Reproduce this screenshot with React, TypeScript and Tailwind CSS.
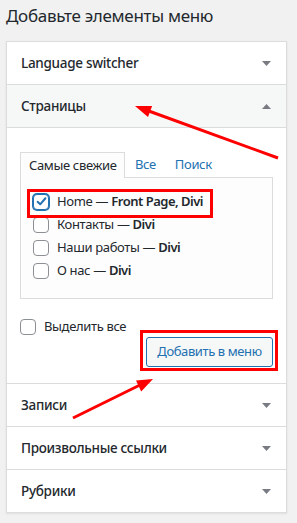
import React from 'react';

const FONT = "font-['Noto_Sans',sans-serif]";

function Triangle({ up }: { up?: boolean }) {
  return (
    <svg width="9" height="5" viewBox="0 0 9 5" className="shrink-0">
      {up ? <polygon points="0,5 9,5 4.5,0" fill="#787c82" /> : <polygon points="0,0 9,0 4.5,5" fill="#787c82" />}
    </svg>
  );
}

function SectionTitle({ title, open, last }: { title: string; open?: boolean; last?: boolean }) {
  return (
    <div
      className={`flex h-[42px] items-center justify-between pl-[14px] pr-[15px] text-[13.5px] font-medium tracking-[-0.3px] ${
        open ? 'bg-[#f6f7f7]' : 'bg-white'
      } ${last ? '' : 'box-content border-b border-[#dcdcde]'}`}
    >
      <span>{title}</span>
      <Triangle up={open} />
    </div>
  );
}

function Checkbox({ checked }: { checked?: boolean }) {
  return (
    <span
      className={`flex h-[16px] w-[16px] shrink-0 items-center justify-center rounded-[4px] border bg-white ${
        checked ? 'border-[#2271b1] shadow-[0_0_0_1px_#2271b1]' : 'border-[#8c8f94]'
      }`}
    >
      {checked && (
        <svg width="13" height="13" viewBox="0 0 20 20">
          <path d="M4 10.5l4 3.8L16 5" fill="none" stroke="#2271b1" strokeWidth="3" strokeLinecap="round" strokeLinejoin="round" />
        </svg>
      )}
    </span>
  );
}

const PAGES = [
  { name: 'Home', extra: 'Front Page, Divi', checked: true },
  { name: 'Контакты', extra: 'Divi' },
  { name: 'Наши работы', extra: 'Divi' },
  { name: 'О нас', extra: 'Divi' },
];

export default function App() {
  return (
    <div className={`relative min-h-[523px] w-[297px] bg-[#f1f1f1] px-[6px] pt-[4px] text-[#23282d] ${FONT}`}>
      <h2 className="h-[37px] text-[17px] leading-[24px] tracking-[-0.3px]">Добавьте элементы меню</h2>

      <div className="w-[281px] border border-[#dcdcde] bg-white shadow-[0_1px_2px_rgba(0,0,0,0.08)]">
        <SectionTitle title="Language switcher" />
        <SectionTitle title="Страницы" open />

        <div className="border-b border-[#dcdcde] px-[13px] pb-[16px] pt-[24px] text-[13px] tracking-[-0.35px]">
          <div className="flex h-[25px] items-stretch">
            <div className="relative z-10 -mb-px flex w-[105px] items-center border border-b-0 border-[#dcdcde] bg-[#fdfdfd] pl-[8px]">
              Самые свежие
            </div>
            <span className="ml-[10px] flex items-center text-[#2271b1]">Все</span>
            <span className="ml-[19px] flex items-center text-[#2271b1]">Поиск</span>
          </div>
          <div className="h-[122px] border border-[#dcdcde] bg-[#fdfdfd] pl-[12px] pt-[12px]">
            {PAGES.map((p) => (
              <label key={p.name} className="flex h-[23px] items-center gap-[8px]">
                <Checkbox checked={p.checked} />
                <span>
                  {p.name} — <span className="font-semibold tracking-[-0.5px]">{p.extra}</span>
                </span>
              </label>
            ))}
          </div>

          <label className="mt-[20px] flex h-[16px] items-center gap-[8px]">
            <Checkbox />
            <span>Выделить все</span>
          </label>
          <div className="mt-[2px] flex justify-end">
            <button
              type="button"
              className="h-[30px] w-[127px] rounded-[3px] border border-[#2271b1] bg-[#f6f7f7] text-[13px] tracking-[-0.4px] text-[#2271b1]"
            >
              Добавить в меню
            </button>
          </div>
        </div>

        <SectionTitle title="Записи" />
        <SectionTitle title="Произвольные ссылки" />
        <SectionTitle title="Рубрики" last />
      </div>

      {/* annotations */}
      <svg className="pointer-events-none absolute left-0 top-0" width="297" height="523" viewBox="0 0 297 523">
        <rect x="28.5" y="190.5" width="183" height="26" fill="none" stroke="#f00" strokeWidth="3" />
        <rect x="141.5" y="331.5" width="135" height="38" fill="none" stroke="#f00" strokeWidth="3" />
        <line x1="278" y1="158" x2="146" y2="110" stroke="#f00" strokeWidth="3" />
        <polygon points="135,106 148,117.1 152.1,105.9" fill="#f00" />
        <line x1="73" y1="418" x2="142" y2="384" stroke="#f00" strokeWidth="3" />
        <polygon points="153,379 141.2,391.4 136,380.6" fill="#f00" />
      </svg>
    </div>
  );
}
